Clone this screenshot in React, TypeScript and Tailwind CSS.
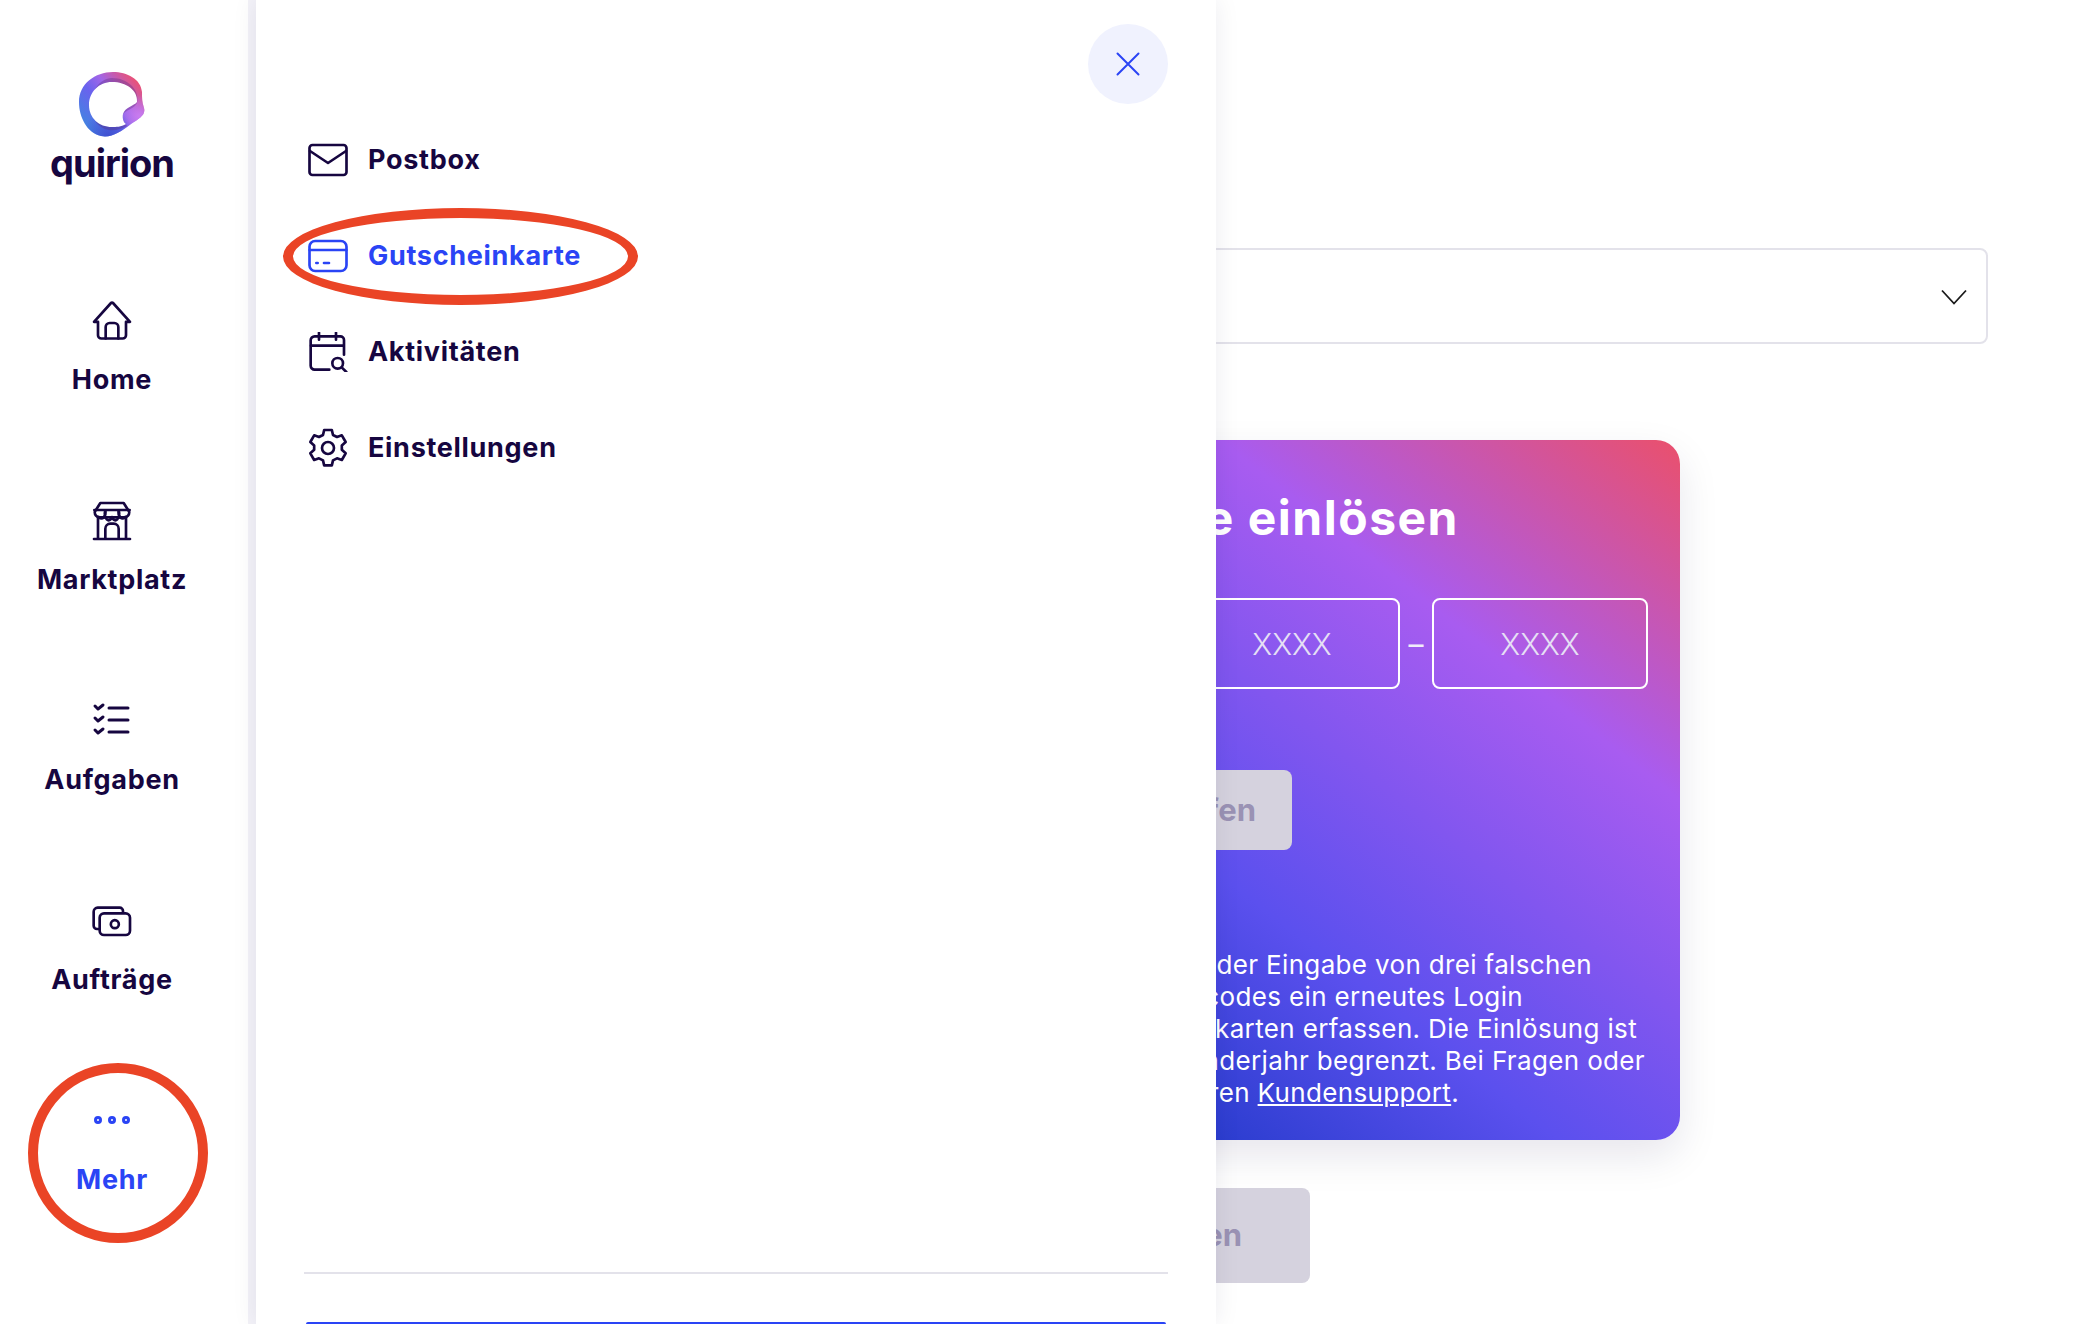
import React from 'react';

const NAVY = '#160640';

function Icon({ className, children }: { className?: string; children: React.ReactNode }) {
  return (
    <svg
      viewBox="0 0 24 24"
      fill="none"
      stroke="currentColor"
      strokeWidth={1.6}
      strokeLinecap="round"
      strokeLinejoin="round"
      className={className ?? 'w-10 h-10'}
    >
      {children}
    </svg>
  );
}

function Logo() {
  const outer = 'M34 0C48 0 62 7 63 20C63 26 63 30 65 36C67 43 60 47 52 52C42 60 32 66 22 64C8 61 0 45 0 30C0 12 16 0 34 0Z';
  return (
    <svg viewBox="0 0 66 65" className="w-[66px] h-[65px]">
      <defs>
        <linearGradient id="ringBase" x1="0.1" y1="0.9" x2="0.95" y2="0.15">
          <stop offset="0" stopColor="#3f86e0" />
          <stop offset="0.4" stopColor="#6a62ee" />
          <stop offset="0.62" stopColor="#a066e8" />
          <stop offset="1" stopColor="#f24f6a" />
        </linearGradient>
        <radialGradient id="ringBump" cx="0.92" cy="0.68" r="0.32">
          <stop offset="0" stopColor="#c97cf0" />
          <stop offset="1" stopColor="#c97cf0" stopOpacity="0" />
        </radialGradient>
        <radialGradient id="ringBottom" cx="0.45" cy="1" r="0.4">
          <stop offset="0" stopColor="#3f4fd0" />
          <stop offset="1" stopColor="#3f4fd0" stopOpacity="0" />
        </radialGradient>
      </defs>
      <path d={outer} fill="url(#ringBase)" />
      <path d={outer} fill="url(#ringBump)" />
      <path d={outer} fill="url(#ringBottom)" />
      <path d="M33 6C48 6 61 17 58 31C55 37 47 38 44 42C43 47 45 51 48 54C42 57 36 59 30 58C18 56 12 46 13 33C13 18 20 7 33 6Z" fill="#5a2c7a" opacity="0.35" />
      <path d="M33 10C47 10 59 18 58 30C55 34 46 35 44 42C43 47 45 51 47 52C42 55 37 55 33 55C20 55 10 46 10 33C10 20 20 10 33 10Z" fill="#fff" />
    </svg>
  );
}

const sideNav = [
  {
    label: 'Home',
    icon: (
      <Icon>
        <path d="M1.200 12.500 11.400 1.200a.8.8 0 0 1 1.200 0L22.800 12.500H20.400V20.500a2 2 0 0 1-2 2H5.600a2 2 0 0 1-2-2V12.500Z" />
        <path d="M8.200 22.500V15.600a2.400 2.400 0 0 1 2.400-2.400h2.800a2.400 2.400 0 0 1 2.400 2.400v6.900" />
      </Icon>
    ),
  },
  {
    label: 'Marktplatz',
    icon: (
      <Icon>
        <path d="M5 1.200h14l3.300 5.200a3 3 0 0 1-2.900 3.400H4.600A3 3 0 0 1 1.700 6.400L5 1.200Z" />
        <path d="M1.400 5.400h21.200M8 5.600a2.500 3.800 0 0 1-4 4M8 5.600a2.100 3.600 0 0 0 4 4M16 5.600a2.100 3.600 0 0 1-4 4M16 5.600a2.500 3.800 0 0 0 4 4" />
        <path d="M3.600 10v12.600M20.400 10v12.600M1.200 22.800h21.600" />
        <path d="M8 22.600v-6a3 3 0 0 1 3-3h2a3 3 0 0 1 3 3v6" />
      </Icon>
    ),
  },
  {
    label: 'Aufgaben',
    icon: (
      <Icon>
        <path strokeWidth={1.8} d="M1.800 3 3.600 4.800 6.600 2.400M1.800 10.200 3.600 12 6.600 9.600M1.800 17.400 3.600 19.200 6.600 16.800" />
        <path strokeWidth={1.8} d="M10.200 4.200h11.400M10.200 11.400h11.400M10.200 18.600h11.400" />
      </Icon>
    ),
  },
  {
    label: 'Aufträge',
    icon: (
      <Icon>
        <path d="M3.800 16.800H3a2 2 0 0 1-2-2V6.400A2.400 2.400 0 0 1 3.400 4h13.200A2 2 0 0 1 18.600 6v.6" />
        <rect x="4.600" y="7.400" width="18.200" height="13" rx="2.600" />
        <circle cx="13.700" cy="13.900" r="2.400" />
      </Icon>
    ),
  },
];

const panelNav = [
  {
    label: 'Postbox',
    active: false,
    icon: (
      <Icon>
        <rect x="0.900" y="3" width="22.200" height="18" rx="1.800" />
        <path d="M1.200 6.600 12 13.800 22.800 6.600" />
      </Icon>
    ),
  },
  {
    label: 'Gutscheinkarte',
    active: true,
    icon: (
      <Icon>
        <rect x="0.900" y="3" width="22.200" height="18" rx="3.400" />
        <path d="M1 8.400h22M5 16.200h.8M9.600 16.200h3" />
      </Icon>
    ),
  },
  {
    label: 'Aktivitäten',
    active: false,
    icon: (
      <Icon>
        <path d="M12.800 22.600H4a2.400 2.400 0 0 1-2.400-2.400V5A2.400 2.400 0 0 1 4 2.600h15.400A2.200 2.200 0 0 1 21.600 4.800V13.600" />
        <path d="M1.800 8.200h19.600M6.600 .4v4.200M16.800 .4v4.200" />
        <circle cx="17.800" cy="18.800" r="3.200" />
        <path d="M20.200 21.200 23 24" />
      </Icon>
    ),
  },
  {
    label: 'Einstellungen',
    active: false,
    icon: (
      <Icon>
        <circle cx="12" cy="12" r="3.600" />
        <path d="M9.700 1.200h4.600l.7 3 2.400 1.200 2.900-1 2.300 4-2.300 2.100v2.600l2.300 2.100-2.300 4-2.900-1-2.400 1.200-.7 3H9.700l-.7-3-2.400-1.200-2.900 1-2.300-4 2.300-2.100V10.500L1.400 8.400l2.300-4 2.900 1L9 4.200l.7-3Z" />
      </Icon>
    ),
  },
];

// Zeilen stehen rechtsbündig, damit der sichtbare Teil neben dem Panel passt
const bodyLines = [
  { w: 'w-[904px]', text: 'Bitte beachte, dass nach der Eingabe von drei falschen' },
  { w: 'w-[835px]', text: 'Gutscheincodes ein erneutes Login' },
  { w: 'w-[949px]', text: 'Du kannst fünf Gutscheinkarten erfassen. Die Einlösung ist' },
  { w: 'w-[957px]', text: 'pro Kalenderjahr begrenzt. Bei Fragen oder' },
];

export default function App() {
  return (
    <div
      className="relative flex w-[2074px] h-[1324px] overflow-hidden bg-white text-[#160640]"
      style={{ fontFamily: 'Inter, Lato, sans-serif' }}
    >
      {/* Seitenleiste */}
      <aside className="w-[248px] shrink-0 pr-6 flex flex-col items-center">
        <div className="mt-[72px] flex flex-col items-center">
          <Logo />
          <span className="mt-[1px] text-[38px] leading-[50px] font-bold tracking-[-1px]">quirion</span>
        </div>
        <nav className="mt-[113px] flex flex-col items-center">
          {sideNav.map((item) => (
            <div key={item.label} className="h-[200px] flex flex-col items-center">
              {item.icon}
              <span className="mt-[21px] text-[27px] leading-[36px] font-bold tracking-[0.7px]">{item.label}</span>
            </div>
          ))}
          <div className="flex flex-col items-center text-[#2a44f5]">
            <div className="h-[38px] flex items-center gap-[6px]">
              <span className="w-2 h-2 rounded-full border-[3px] border-[#2a44f5]" />
              <span className="w-2 h-2 rounded-full border-[3px] border-[#2a44f5]" />
              <span className="w-2 h-2 rounded-full border-[3px] border-[#2a44f5]" />
            </div>
            <span className="mt-[23px] text-[27px] leading-[36px] font-bold tracking-[0.7px]">Mehr</span>
          </div>
        </nav>
      </aside>
      <div className="w-2 shrink-0 bg-[#f3f2f8]" />

      {/* Seiteninhalt unter dem Panel */}
      <main className="pl-[400px] pt-[248px]">
        <div className="w-[1332px] h-24 rounded-lg border-2 border-[#e3e2ea] flex items-center justify-end pr-[19px]">
          <svg viewBox="0 0 26 16" className="mt-[2px] w-[26px] h-4 text-[#1a1a1a]" fill="none" stroke="currentColor" strokeWidth={1.8}>
            <path d="M1 1.500 13 14.500 25 1.500" />
          </svg>
        </div>

        <section className="mt-24 w-[1024px] h-[700px] rounded-3xl px-8 bg-[linear-gradient(38deg,#2b3dcf_29%,#5b50ee_47%,#a85cf0_76%,#ea506c_100%)] shadow-[0_16px_40px_rgba(22,6,64,0.1)] text-white">
          <h2 className="pt-[46px] w-[771px] h-[158px] text-right text-[48px] leading-[64px] font-bold tracking-[1.5px] whitespace-nowrap">
            Gutscheincode einlösen
          </h2>
          <div className="flex items-center">
            {[0, 1, 2, 3].map((i) => (
              <React.Fragment key={i}>
                {i > 0 && <span className="w-8 text-center text-[30px] leading-none text-[#f0ecfa]">–</span>}
                <input
                  readOnly
                  placeholder="XXXX"
                  className="w-[216px] h-[91px] rounded-lg border-2 border-white bg-transparent text-center text-[30px] font-light outline-none placeholder:text-[#e6e0f5]"
                />
              </React.Fragment>
            ))}
          </div>
          <button className="mt-[81px] w-[604px] h-20 rounded-lg bg-[#d5d2de] flex items-center justify-end pr-9 text-[31px] font-bold text-[#9a92b4]">
            Gutschein prüfen
          </button>
          <div className="mt-[99px] text-[26px] leading-8 font-normal tracking-[0.35px]">
            {bodyLines.map((l) => (
              <div key={l.text} className={`${l.w} flex justify-end whitespace-nowrap`}>
                {l.text}
              </div>
            ))}
            <div className="w-[771px] flex justify-end whitespace-pre">
              Wende dich an unseren <span className="underline underline-offset-2">Kundensupport</span>.
            </div>
          </div>
        </section>

        <button className="mt-12 w-[654px] h-[95px] rounded-lg bg-[#d5d2de] flex items-center justify-end pr-[68px] text-[31px] font-bold text-[#9a92b4]">
          Gutschein einlösen
        </button>
      </main>

      {/* Aufgeklapptes Panel */}
      <div className="absolute left-[256px] top-0 w-[960px] h-full bg-white shadow-[0_0_24px_rgba(22,6,64,0.08)] px-12 flex flex-col">
        <div className="pt-6 flex justify-end">
          <button className="w-20 h-20 rounded-full bg-[#f0f2fe] flex items-center justify-center text-[#2a44f5]">
            <svg viewBox="0 0 24 24" className="w-6 h-6" fill="none" stroke="currentColor" strokeWidth={2} strokeLinecap="round">
              <path d="M1.500 1.500 22.500 22.500M22.500 1.500 1.500 22.500" />
            </svg>
          </button>
        </div>
        <div className="mt-[8px] pl-1 flex flex-col">
          {panelNav.map((item) => (
            <div
              key={item.label}
              className={`h-24 flex items-center gap-5 text-[27px] font-bold tracking-[0.7px] ${item.active ? 'text-[#2a44f5]' : ''}`}
              style={item.active ? undefined : { color: NAVY }}
            >
              {item.icon}
              {item.label}
            </div>
          ))}
        </div>
        <div className="mt-auto border-t-2 border-[#e3e2ea] h-[52px] flex flex-col justify-end">
          <div className="h-[2px] mx-[2px] rounded-t bg-[#2a44f5]" />
        </div>
      </div>

      {/* rote Markierungen */}
      <div className="absolute left-[283px] top-[208px] w-[355px] h-[97px] rounded-[50%] border-[10px] border-[#ea4426]" />
      <div className="absolute left-[28px] top-[1063px] w-[180px] h-[180px] rounded-full border-[10px] border-[#ea4426]" />
    </div>
  );
}
